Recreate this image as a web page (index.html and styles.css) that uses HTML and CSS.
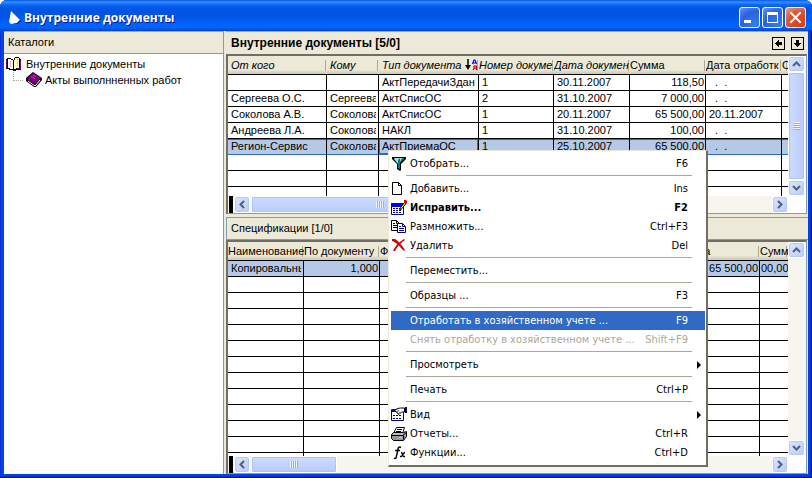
FILE: index.html
```html
<!DOCTYPE html>
<html lang="ru">
<head>
    <meta charset="UTF-8">
    <meta name="viewport" content="width=device-width, initial-scale=1.0">
    <title>Внутренние документы</title>
    <link rel="stylesheet" href="styles.css">
</head>
<body>
    <div class="window">
        <header class="titlebar">
            <svg class="app-icon" width="16" height="16" viewBox="0 0 16 16">
                <path d="M5 1l9 9-3 3-6 1-2-2z" fill="#fff"/>
                <path d="M14 10l-3 3-4 1 5 0 3-3z" fill="#0a2a8c"/>
            </svg>
            <h1>Внутренние документы</h1>
            <button class="win-btn" aria-label="Свернуть">
                <svg width="19" height="19" viewBox="0 0 19 19"><path d="M4 12h7v3H4z" fill="#fff"/></svg>
            </button>
            <button class="win-btn" aria-label="Развернуть">
                <svg width="19" height="19" viewBox="0 0 19 19"><path d="M4 4h11v11H4zM5 7v7h9V7z" fill="#fff" fill-rule="evenodd"/></svg>
            </button>
            <button class="win-btn close" aria-label="Закрыть">
                <svg width="19" height="19" viewBox="0 0 19 19"><path d="M5 5l9 9M14 5l-9 9" stroke="#fff" stroke-width="2" stroke-linecap="square"/></svg>
            </button>
        </header>

        <div class="content">
            <nav class="catalogs">
                <h2 class="pane-title">Каталоги</h2>
                <ul class="tree">
                    <li>
                        <svg width="18" height="16" viewBox="0 0 18 16" shape-rendering="crispEdges">
                            <path d="M1 3h1V2h4v1h2v1h1V2h1V1h4v1h1v1h1v11h-5v1H8v-1H4v-1H1z" fill="#000"/>
                            <path d="M3 3h3v1h2v9H5v-1H3z" fill="#fff"/>
                            <path d="M9 4h1V2h4v10h-3v1H9z" fill="#ffffc0"/>
                            <path d="M1 4h1v8H1zM15 4h1v9h-4v-1h3z" fill="#800080"/>
                            <path d="M12 3h1v1h-1zM12 5h1v1h-1zM12 7h1v1h-1zM12 9h1v1h-1z" fill="#e0c000"/>
                            <path d="M5 5h1v6H5z" fill="#c0c0c0"/>
                        </svg>
                        <span>Внутренние документы</span>
                    </li>
                    <li class="child">
                        <svg width="18" height="16" viewBox="0 0 18 16">
                            <path d="M8 0l9 6v2l-6 7H9L1 9V6z" fill="#000"/>
                            <path d="M8 1l8 5-6 6-8-5z" fill="#800080"/>
                            <path d="M3 9l7 5 5-6" fill="none" stroke="#fff"/>
                            <path d="M6 4l4 3M8 3l3 2" stroke="#b050b0"/>
                        </svg>
                        <span>Акты выполнненных работ</span>
                    </li>
                </ul>
            </nav>

            <main class="work">
                <div class="pane-title main-title">
                    <h2>Внутренние документы [5/0]</h2>
                    <button class="nav-btn" aria-label="Назад">
                        <svg width="11" height="11" viewBox="0 0 11 11" shape-rendering="crispEdges"><path d="M2 5h1V4h1V3h1V2h1v2h3v3H6v2H5V8H4V7H3V6H2z"/></svg>
                    </button>
                    <button class="nav-btn" aria-label="Вниз">
                        <svg width="11" height="11" viewBox="0 0 11 11" shape-rendering="crispEdges"><path d="M4 2h3v3h2v1H8v1H7v1H6v1H5V8H4V7H3V6H2V5h2z"/></svg>
                    </button>
                </div>

                <section class="grid documents">
                    <div class="grid-view">
                        <table>
                            <colgroup>
                                <col class="w-99"><col class="w-52"><col class="w-100"><col class="w-75"><col class="w-76"><col class="w-76"><col class="w-76"><col>
                            </colgroup>
                            <thead>
                                <tr>
                                    <th class="key pad">От кого</th>
                                    <th class="key pad">Кому</th>
                                    <th class="key pad sorted">Тип документа
                                        <svg width="13" height="12" viewBox="0 0 13 12">
                                            <path d="M3 0v9" stroke="#000" stroke-width="1.5"/><path d="M0 6h6L3 11z"/>
                                            <path d="M7.500 5L9 1h1l1.500 4M8 4h3" fill="none" stroke="#00f" stroke-width="1.2"/>
                                            <path d="M11.500 11V7H9v2h2.500M9.500 9L8 11" fill="none" stroke="#c00000" stroke-width="1.2"/>
                                        </svg>
                                    </th>
                                    <th class="key">Номер докуме</th>
                                    <th class="key">Дата докумен</th>
                                    <th>Сумма</th>
                                    <th>Дата отработк</th>
                                    <th>С</th>
                                </tr>
                            </thead>
                            <tbody>
                                <tr><td></td><td></td><td>АктПередачиЗдан</td><td>1</td><td>30.11.2007</td><td class="num">118,50</td><td class="blank">. &nbsp;.</td><td></td></tr>
                                <tr><td>Сергеева О.С.</td><td><span>Сергеева</span></td><td>АктСписОС</td><td>2</td><td>31.10.2007</td><td class="num">7 000,00</td><td class="blank">. &nbsp;.</td><td></td></tr>
                                <tr><td>Соколова А.В.</td><td><span>Соколова</span></td><td>АктСписОС</td><td>1</td><td>20.11.2007</td><td class="num">65 500,00</td><td>20.11.2007</td><td></td></tr>
                                <tr><td>Андреева Л.А.</td><td><span>Соколова</span></td><td>НАКЛ</td><td>1</td><td>31.10.2007</td><td class="num">100,00</td><td class="blank">. &nbsp;.</td><td></td></tr>
                                <tr class="selected"><td>Регион-Сервис</td><td><span>Соколова</span></td><td class="active">АктПриемаОС</td><td>1</td><td>25.10.2007</td><td class="num">65 500,00</td><td class="blank">. &nbsp;.</td><td></td></tr>
                                <tr class="filler"><td></td><td></td><td></td><td></td><td></td><td></td><td></td><td></td></tr>
                            </tbody>
                        </table>
                    </div>
                    <div class="vscroll">
                        <button aria-label="Вверх"><svg width="9" height="6" viewBox="0 0 9 6"><path d="M1 5l3.500-3.500L8 5"/></svg></button>
                        <div class="thumb"></div>
                        <button aria-label="Вниз"><svg width="9" height="6" viewBox="0 0 9 6"><path d="M1 1l3.500 3.500L8 1"/></svg></button>
                    </div>
                    <div class="hscroll">
                        <button aria-label="Влево"><svg width="6" height="9" viewBox="0 0 6 9"><path d="M5 1L1.500 4.500 5 8"/></svg></button>
                        <div class="thumb"></div>
                        <button aria-label="Вправо"><svg width="6" height="9" viewBox="0 0 6 9"><path d="M1 1l3.500 3.500L1 8"/></svg></button>
                    </div>
                </section>

                <h2 class="pane-title sub-title">Спецификации [1/0]</h2>

                <section class="grid specs">
                    <div class="grid-view">
                        <table>
                            <colgroup>
                                <col class="w-76"><col class="w-76"><col class="w-76"><col class="w-76"><col class="w-76"><col class="w-76"><col class="w-76"><col>
                            </colgroup>
                            <thead>
                                <tr><th>Наименование</th><th>По документу</th><th>Ф</th><th></th><th></th><th></th><th>Цена</th><th>Сумм</th></tr>
                            </thead>
                            <tbody>
                                <tr class="current"><td><span>Копировальный</span></td><td class="num">1,000</td><td></td><td></td><td></td><td></td><td class="num">65 500,00</td><td class="num">00,00</td></tr>
                                <tr class="filler"><td></td><td></td><td></td><td></td><td></td><td></td><td></td><td></td></tr>
                            </tbody>
                        </table>
                    </div>
                    <div class="vscroll">
                        <button aria-label="Вверх"><svg width="9" height="6" viewBox="0 0 9 6"><path d="M1 5l3.500-3.500L8 5"/></svg></button>
                        <button aria-label="Вниз"><svg width="9" height="6" viewBox="0 0 9 6"><path d="M1 1l3.500 3.500L8 1"/></svg></button>
                    </div>
                    <div class="hscroll">
                        <button aria-label="Влево"><svg width="6" height="9" viewBox="0 0 6 9"><path d="M5 1L1.500 4.500 5 8"/></svg></button>
                        <div class="thumb"></div>
                        <button aria-label="Вправо"><svg width="6" height="9" viewBox="0 0 6 9"><path d="M1 1l3.500 3.500L1 8"/></svg></button>
                    </div>
                </section>
            </main>
        </div>

        <div class="menu">
            <button>
                <svg width="16" height="16" viewBox="0 0 16 16">
                    <path d="M1 1h14v2l-5 5v6l-1 1-3-2V8L1 3z" fill="#000"/>
                    <path d="M3 2h10v1L9 7v6l-2-1V7L3 3z" fill="#008080"/>
                    <path d="M4 2h5L7 4v4L3 3z" fill="#a8e0e0"/>
                    <path d="M9 2h2L9 6z" fill="#d0d0d0"/>
                </svg>
                <span>Отобрать...</span><kbd>F6</kbd>
            </button>
            <hr>
            <button>
                <svg width="16" height="16" viewBox="0 0 16 16"><path d="M1.500 1.500h6l3 3v9h-9zM7.500 1.500v3h3" fill="#fff" stroke="#000"/></svg>
                <span>Добавить...</span><kbd>Ins</kbd>
            </button>
            <button class="default">
                <svg width="16" height="16" viewBox="0 0 16 16">
                    <path d="M.5 4.500h12v10H.5z" fill="#fff" stroke="#00008b"/>
                    <path d="M0 3h13v4H0z" fill="#00f"/>
                    <path d="M2 8.500h9M2 10.500h9M2 12.500h9" stroke="#00008b" stroke-dasharray="2 1"/>
                    <path d="M8.500 10.500l1-3 4-5 1.500 1-4 5z" fill="#ff0" stroke="#000"/>
                    <path d="M13 0h2l1 1v2l-1 1-2-2z" fill="#e00000"/>
                </svg>
                <span>Исправить...</span><kbd>F2</kbd>
            </button>
            <button>
                <svg width="16" height="16" viewBox="0 0 16 16">
                    <path d="M.5 1.500h5l3 3v7h-8zM5.500 1.500v3h3" fill="#fff" stroke="#000"/>
                    <path d="M2 4.500h2M2 6.500h4M2 8.500h4" stroke="#000"/>
                    <path d="M6.500 4.500h5l3 3v6h-8zM11.500 4.500v3h3" fill="#fff" stroke="#00008b"/>
                    <path d="M8 7.500h2M8 9.500h5M8 11.500h5" stroke="#00008b"/>
                </svg>
                <span>Размножить...</span><kbd>Ctrl+F3</kbd>
            </button>
            <button>
                <svg width="16" height="16" viewBox="0 0 16 16">
                    <path d="M1 1h3c3 2 7 6 10 11l-1 1C9 9 5 4 1 3z" fill="#d00000"/>
                    <path d="M13 1l1 1C9 5 6 9 4 13H2C4 8 8 4 13 1z" fill="#d00000"/>
                </svg>
                <span>Удалить</span><kbd>Del</kbd>
            </button>
            <hr>
            <button><span>Переместить...</span></button>
            <hr>
            <button><span>Образцы ...</span><kbd>F3</kbd></button>
            <hr>
            <button class="hover"><span>Отработать в хозяйственном учете ...</span><kbd>F9</kbd></button>
            <button disabled><span>Снять отработку в хозяйственном учете ...</span><kbd>Shift+F9</kbd></button>
            <hr>
            <button class="sub"><span>Просмотреть</span></button>
            <hr>
            <button><span>Печать</span><kbd>Ctrl+P</kbd></button>
            <hr>
            <button class="sub">
                <svg width="16" height="16" viewBox="0 0 16 16">
                    <path d="M.5 2.500h12v11H.5z" fill="#fff" stroke="#00008b"/>
                    <path d="M1 2h3v3H1z" fill="#00f"/>
                    <path d="M2 8.500h9M2 11.500h9" stroke="#000" stroke-dasharray="2 1"/>
                    <path d="M3.500 3.500l3-2 3-.5h4v4h-3L8 7.500z" fill="#fff" stroke="#000"/>
                    <path d="M4 3l4 4M6 2l3 4M8 3L5 6" stroke="#444" stroke-width=".6"/>
                    <path d="M14 0h2v6h-2z" fill="#00008b"/>
                </svg>
                <span>Вид</span>
            </button>
            <button>
                <svg width="16" height="16" viewBox="0 0 16 16">
                    <path d="M5.500 1.500h8l-2 6h-9z" fill="#fff" stroke="#000"/>
                    <path d="M6 3.500h5M5 5.500h5" stroke="#000"/>
                    <path d="M.5 8.500l2-2h10l3-1v5l-3 4h-10l-2-2z" fill="#999" stroke="#000"/>
                    <path d="M1 9.500h11l3-3M12.500 9.500v4" fill="none" stroke="#000"/>
                    <path d="M2 8h10" stroke="#ddd"/>
                    <path d="M8 11.500h3" stroke="#e8e800"/>
                </svg>
                <span>Отчеты...</span><kbd>Ctrl+R</kbd>
            </button>
            <button>
                <svg width="16" height="16" viewBox="0 0 16 16" fill="none" stroke="#000">
                    <path d="M10 2.500c-2-1-3 0-3 2L5.500 11c0 2-1 3-2.500 2" stroke-width="1.5"/>
                    <path d="M4 5.500h5M10 7.500c2 0 1 4 3 4h1M14 7.500c-2 0-2 4-4 4H9" stroke-width="1.3"/>
                </svg>
                <span>Функции...</span><kbd>Ctrl+D</kbd>
            </button>
        </div>
    </div>
</body>
</html>
```
FILE: styles.css
```css
* {
    box-sizing: border-box;
}
body {
    margin: 0;
    background: #fff;
    font: 11px "Liberation Sans", Arial, sans-serif;
    color: #000;
}
button {
    font: inherit;
    margin: 0;
    padding: 0;
}
h1, h2, ul {
    margin: 0;
    padding: 0;
    font: inherit;
}
.window {
    position: relative;
    display: flex;
    flex-direction: column;
    height: 100vh;
    padding: 0 4px 4px;
    background: #0046dd;
    border-radius: 7px 7px 0 0;
    box-shadow: inset -1px -1px #00138c, inset 1px 0 #0831d9, inset -2px -2px #0030c8;
    overflow: hidden;
}

/* title bar */
.titlebar {
    display: flex;
    align-items: center;
    gap: 2px;
    height: 31px;
    flex: none;
    margin: 0 -4px;
    padding: 4px 6px 0 6px;
    border-radius: 7px 7px 0 0;
    background: linear-gradient(#0058e6 0, #3a8cff 2px, #0566f0 5px, #0054e3 9px, #0055e5 16px, #0062ff 24px, #0063fb 28px, #0040c8 31px);
}
.titlebar h1 {
    flex: 1;
    font: bold 12px "Open Sans", sans-serif;
    color: #fff;
    text-shadow: 1px 1px #0a1883;
}
.win-btn {
    width: 21px;
    height: 21px;
    border: 1px solid #fff;
    border-radius: 3px;
    background: radial-gradient(circle at 80% 90%, #2f7ff5, #2a62dc 60%, #6d95ee);
}
.win-btn.close {
    background: radial-gradient(circle at 80% 90%, #d8400c, #dc5430 60%, #f0a088);
}
.win-btn svg {
    display: block;
}

/* panes */
.content {
    display: flex;
    flex: 1;
    gap: 2px;
    min-height: 0;
    background: #ece9d8;
}
.pane-title {
    flex: none;
    height: 23px;
    padding: 0 4px;
    line-height: 21px;
    background: #ece9d8;
    border-top: 1px solid #aca899;
    border-bottom: 1px solid #7f9db9;
}
.catalogs {
    display: flex;
    flex-direction: column;
    width: 220px;
    border-right: 1px solid #7f9db9;
}
.tree {
    flex: 1;
    padding: 2px 0 0 1px;
    background: #fff;
    list-style: none;
}
.tree li {
    display: flex;
    align-items: center;
    gap: 3px;
    height: 16px;
}
.tree .child {
    gap: 2px;
    padding-left: 8px;
}
.tree .child::before {
    content: "";
    align-self: flex-start;
    width: 9px;
    height: 8px;
    border-left: 1px dotted #aca899;
    border-bottom: 1px dotted #aca899;
}
.work {
    display: flex;
    flex: 1;
    flex-direction: column;
    min-width: 0;
}
.main-title {
    display: flex;
    align-items: center;
    gap: 6px;
    padding: 0 4px 0 5px;
    border-bottom: none;
}
.main-title h2 {
    flex: 1;
    font-size: 12px;
    font-weight: bold;
}
.nav-btn {
    width: 13px;
    height: 13px;
    border: 1px solid #000;
    background: #ece9d8;
}
.nav-btn svg {
    display: block;
}
.sub-title {
    margin-top: 3px;
    border: 1px solid #7f9db9;
    border-right: none;
}

/* grids */
.grid {
    display: grid;
    grid-template-columns: 1fr 18px;
    grid-template-rows: 1fr 17px;
    min-height: 0;
    margin-right: 1px;
    background: #fff;
    border: 1px solid #7f9db9;
    border-top: 2px solid #716f64;
    border-left: 2px solid #716f64;
}
.documents {
    flex: 159 0 0;
}
.specs {
    flex: 235 0 0;
}
.grid-view {
    min-height: 0;
    overflow: hidden;
}
table {
    width: 100%;
    height: 100%;
    table-layout: fixed;
    border-spacing: 0;
}
.w-52 { width: 52px; }
.w-75 { width: 75px; }
.w-76 { width: 76px; }
.w-99 { width: 99px; }
.w-100 { width: 100px; }
th {
    height: 19px;
    padding: 0;
    font-weight: normal;
    text-align: left;
    white-space: nowrap;
    overflow: hidden;
    border-bottom: 1px solid #000;
    background: linear-gradient(#aca899, #aca899) right 1px top 4px / 1px 11px no-repeat, linear-gradient(#ece9d8 75%, #cbc7b8);
}
th.key {
    font-style: italic;
}
th.pad {
    padding-left: 3px;
}
.sorted svg {
    margin-left: 1px;
    vertical-align: -2px;
}
td {
    height: 16px;
    padding: 0 2px 0 3px;
    line-height: 15px;
    white-space: nowrap;
    overflow: hidden;
    border-right: 1px solid #000;
    border-bottom: 1px solid #000;
}
td span {
    display: block;
    overflow: hidden;
}
td:last-child {
    border-right: none;
}
td.num {
    padding: 0 1px;
    text-align: right;
}
td.blank {
    padding-left: 9px;
}
.selected td,
.current td {
    background: #b5c9e7;
}
.selected td {
    border-bottom-color: #316ac5;
    box-shadow: inset 0 1px #316ac5;
}
.selected .active {
    box-shadow: inset 0 0 0 1px #316ac5;
}
.filler td {
    height: auto;
    border-bottom: none;
    background: repeating-linear-gradient(#fff 0, #fff 15px, #000 15px, #000 16px);
}

/* scroll bars */
.vscroll,
.hscroll {
    display: flex;
    justify-content: space-between;
    background: #f6f5f0;
}
.vscroll {
    flex-direction: column;
    padding-right: 1px;
}
.hscroll {
    gap: 1px;
    padding-left: 1px;
}
.hscroll::before {
    content: "";
    width: 4px;
    background: #000;
}
.vscroll button,
.hscroll button {
    display: flex;
    flex: none;
    align-items: center;
    justify-content: center;
    border: 1px solid #fff;
    border-radius: 3px;
    background: linear-gradient(135deg, #dbe5ff, #b9cbf8);
    box-shadow: inset 0 0 0 1px #b8caf3;
}
.vscroll button {
    height: 16px;
}
.hscroll button {
    width: 16px;
}
.vscroll svg path,
.hscroll svg path {
    fill: none;
    stroke: #4d6185;
    stroke-width: 2;
}
.thumb {
    display: flex;
    border: 1px solid #fff;
    border-radius: 2px;
    box-shadow: inset 0 0 0 1px #b0c4f0;
}
.vscroll .thumb {
    flex: 1;
    background: linear-gradient(90deg, #cddbff, #b9cbf8);
}
.hscroll .thumb {
    margin-right: auto;
    background: linear-gradient(#cddbff, #b9cbf8);
}
.thumb::after {
    content: "";
    margin: auto;
    width: 8px;
    height: 7px;
    background: repeating-linear-gradient(90deg, #eef4fe 0, #eef4fe 1px, #8cb0f8 1px, #8cb0f8 2px);
}
.vscroll .thumb::after {
    width: 7px;
    height: 8px;
    background: repeating-linear-gradient(#eef4fe 0, #eef4fe 1px, #8cb0f8 1px, #8cb0f8 2px);
}
.documents .hscroll .thumb {
    width: 46%;
}
.specs .hscroll .thumb {
    width: 86px;
}

/* context menu */
.menu {
    position: absolute;
    left: 388px;
    top: 150px;
    width: 320px;
    padding: 3px 1px 3px 2px;
    background: #fff;
    border: 1px solid #ece9d8;
    border-right: 2px solid #716f64;
    border-bottom: 2px solid #716f64;
    font-family: "DejaVu Sans Condensed", Tahoma, sans-serif;
}
.menu button {
    display: flex;
    align-items: center;
    width: 100%;
    height: 19px;
    padding: 0 17px 0 0;
    border: none;
    background: none;
    color: #000;
    text-align: left;
}
.menu button svg {
    flex: none;
    margin-right: 3px;
}
.menu span {
    flex: 1;
}
.menu span:first-child {
    padding-left: 19px;
}
.menu kbd {
    font: inherit;
}
.menu .default {
    font-weight: bold;
}
.menu .hover {
    background: #316ac5;
    color: #fff;
}
.menu button:disabled {
    color: #aca899;
}
.menu .sub {
    padding-right: 4px;
}
.menu .sub::after {
    content: "";
    border: 4px solid transparent;
    border-left-color: #000;
    border-right: none;
}
.menu hr {
    height: 1px;
    margin: 2px 13px 3px 15px;
    border: none;
    background: #aca899;
}
```
